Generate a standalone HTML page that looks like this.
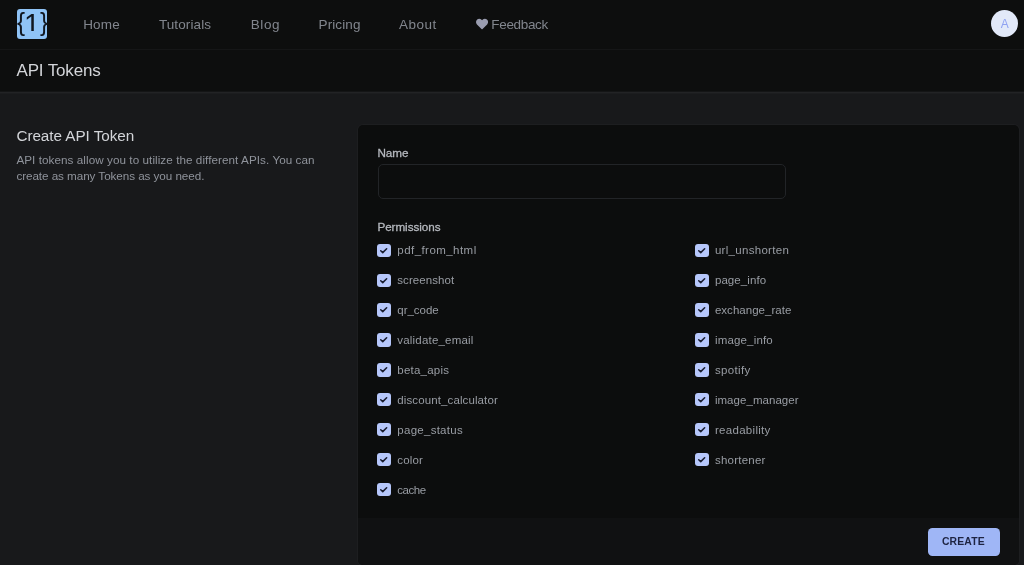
<!DOCTYPE html>
<html lang="en">
<head>
<meta charset="utf-8">
<title>API Tokens</title>
<style>
*{box-sizing:border-box;margin:0;padding:0}
html,body{width:1024px;height:565px;overflow:hidden}
body{background:#18191b;font-family:"Liberation Sans",sans-serif;position:relative}
#wrap{position:absolute;left:0;top:0;width:1024px;height:565px;will-change:transform}
.nav{position:absolute;left:0;top:0;width:1024px;height:50px;background:#0d0e0e;border-bottom:1px solid #151617}
.header{position:absolute;left:0;top:50px;width:1024px;height:43px;background:#0d0e0e;border-bottom:1px solid #222325;box-shadow:inset 0 -1px 0 #141516,0 1px 0 #1c1d1f}
.logo{position:absolute;left:16.5px;top:8.6px;width:30.7px;height:30px;border-radius:3px;background:#8fc3f6}
.lg{position:absolute;display:block;color:#10161f;white-space:pre}
.br{font-size:26px;line-height:30px;transform:scaleX(.93);transform-origin:0 0}
.oneclip{position:absolute;display:block;left:22px;top:10px;width:16px;height:21px;overflow:hidden}
.one{left:1.92px;top:-2px;font-size:28.9px;line-height:32px}
.avatar{position:absolute;left:991.1px;top:10.2px;width:27px;height:27px;border-radius:50%;background:#e2e9f9}
.heart{position:absolute;left:476px;top:18.4px;width:12.1px;height:12.1px}
.card{position:absolute;left:357.7px;top:124.6px;width:661px;height:440.6px;background:#0c0d0d;border-radius:5px;overflow:hidden;box-shadow:0 0 0 1px #1d1e20}
.foot{position:absolute;left:0;top:393.2px;width:100%;height:60px;background:#101112}
.input{position:absolute;left:377.5px;top:164.3px;width:408.5px;height:35.1px;border:1px solid #222427;border-radius:5px;background:#0c0d0d}
.cb{position:absolute;width:13.4px;height:13.4px;border-radius:3px;background:#b6c7fb}
.cb svg{position:absolute;left:0;top:0;width:13.4px;height:13.4px}
.btn{position:absolute;left:927.8px;top:527.5px;width:72.2px;height:28.1px;border-radius:4.5px;background:#9fb6f6}
.t{position:absolute;white-space:pre;font-weight:normal;display:block}
</style>
</head>
<body>
<div id="wrap">
<div class="nav"></div>
<div class="header"></div>
<div class="logo"></div>
<div class="lgw"><span class="lg br" id="lg1" style="left:16.5px;top:6.5px">{</span><span class="oneclip"><span class="lg one" id="lg2">1</span></span><span class="lg br" id="lg3" style="left:39.6px;top:6.5px">}</span></div>
<svg class="heart" viewBox="0 0 512 512"><path d="M462.3 62.6C407.5 15.9 326 24.300 275.700 76.200L256 96.500l-19.700-20.300C186.100 24.300 104.500 15.900 49.700 62.600c-62.800 53.600-66.100 149.800-9.900 207.900l193.500 199.800c12.500 12.900 32.800 12.900 45.300 0l193.500-199.800c56.300-58.100 53-154.300-9.800-207.900z" fill="#9a9db0"/></svg>
<div class="avatar"></div>
<div class="card"><div class="foot"></div></div>
<div class="input"></div>
<div class="cb" style="left:377.2px;top:243.65px"><svg viewBox="0 0 13.4 13.4"><path d="M3.75 6.8L5.75 8.6L9.65 4.8" fill="none" stroke="#171b2e" stroke-width="1.55" stroke-linecap="round" stroke-linejoin="round"/></svg></div>
<div class="cb" style="left:377.2px;top:273.54px"><svg viewBox="0 0 13.4 13.4"><path d="M3.75 6.8L5.75 8.6L9.65 4.8" fill="none" stroke="#171b2e" stroke-width="1.55" stroke-linecap="round" stroke-linejoin="round"/></svg></div>
<div class="cb" style="left:377.2px;top:303.43px"><svg viewBox="0 0 13.4 13.4"><path d="M3.75 6.8L5.75 8.6L9.65 4.8" fill="none" stroke="#171b2e" stroke-width="1.55" stroke-linecap="round" stroke-linejoin="round"/></svg></div>
<div class="cb" style="left:377.2px;top:333.32px"><svg viewBox="0 0 13.4 13.4"><path d="M3.75 6.8L5.75 8.6L9.65 4.8" fill="none" stroke="#171b2e" stroke-width="1.55" stroke-linecap="round" stroke-linejoin="round"/></svg></div>
<div class="cb" style="left:377.2px;top:363.21px"><svg viewBox="0 0 13.4 13.4"><path d="M3.75 6.8L5.75 8.6L9.65 4.8" fill="none" stroke="#171b2e" stroke-width="1.55" stroke-linecap="round" stroke-linejoin="round"/></svg></div>
<div class="cb" style="left:377.2px;top:393.10px"><svg viewBox="0 0 13.4 13.4"><path d="M3.75 6.8L5.75 8.6L9.65 4.8" fill="none" stroke="#171b2e" stroke-width="1.55" stroke-linecap="round" stroke-linejoin="round"/></svg></div>
<div class="cb" style="left:377.2px;top:422.99px"><svg viewBox="0 0 13.4 13.4"><path d="M3.75 6.8L5.75 8.6L9.65 4.8" fill="none" stroke="#171b2e" stroke-width="1.55" stroke-linecap="round" stroke-linejoin="round"/></svg></div>
<div class="cb" style="left:377.2px;top:452.88px"><svg viewBox="0 0 13.4 13.4"><path d="M3.75 6.8L5.75 8.6L9.65 4.8" fill="none" stroke="#171b2e" stroke-width="1.55" stroke-linecap="round" stroke-linejoin="round"/></svg></div>
<div class="cb" style="left:377.2px;top:482.77px"><svg viewBox="0 0 13.4 13.4"><path d="M3.75 6.8L5.75 8.6L9.65 4.8" fill="none" stroke="#171b2e" stroke-width="1.55" stroke-linecap="round" stroke-linejoin="round"/></svg></div>
<div class="cb" style="left:695.3px;top:243.65px"><svg viewBox="0 0 13.4 13.4"><path d="M3.75 6.8L5.75 8.6L9.65 4.8" fill="none" stroke="#171b2e" stroke-width="1.55" stroke-linecap="round" stroke-linejoin="round"/></svg></div>
<div class="cb" style="left:695.3px;top:273.54px"><svg viewBox="0 0 13.4 13.4"><path d="M3.75 6.8L5.75 8.6L9.65 4.8" fill="none" stroke="#171b2e" stroke-width="1.55" stroke-linecap="round" stroke-linejoin="round"/></svg></div>
<div class="cb" style="left:695.3px;top:303.43px"><svg viewBox="0 0 13.4 13.4"><path d="M3.75 6.8L5.75 8.6L9.65 4.8" fill="none" stroke="#171b2e" stroke-width="1.55" stroke-linecap="round" stroke-linejoin="round"/></svg></div>
<div class="cb" style="left:695.3px;top:333.32px"><svg viewBox="0 0 13.4 13.4"><path d="M3.75 6.8L5.75 8.6L9.65 4.8" fill="none" stroke="#171b2e" stroke-width="1.55" stroke-linecap="round" stroke-linejoin="round"/></svg></div>
<div class="cb" style="left:695.3px;top:363.21px"><svg viewBox="0 0 13.4 13.4"><path d="M3.75 6.8L5.75 8.6L9.65 4.8" fill="none" stroke="#171b2e" stroke-width="1.55" stroke-linecap="round" stroke-linejoin="round"/></svg></div>
<div class="cb" style="left:695.3px;top:393.10px"><svg viewBox="0 0 13.4 13.4"><path d="M3.75 6.8L5.75 8.6L9.65 4.8" fill="none" stroke="#171b2e" stroke-width="1.55" stroke-linecap="round" stroke-linejoin="round"/></svg></div>
<div class="cb" style="left:695.3px;top:422.99px"><svg viewBox="0 0 13.4 13.4"><path d="M3.75 6.8L5.75 8.6L9.65 4.8" fill="none" stroke="#171b2e" stroke-width="1.55" stroke-linecap="round" stroke-linejoin="round"/></svg></div>
<div class="cb" style="left:695.3px;top:452.88px"><svg viewBox="0 0 13.4 13.4"><path d="M3.75 6.8L5.75 8.6L9.65 4.8" fill="none" stroke="#171b2e" stroke-width="1.55" stroke-linecap="round" stroke-linejoin="round"/></svg></div>
<div class="btn"></div>
<a class="t" id="n1" style="left:83.15px;top:16px;font-size:13.5px;line-height:18px;color:#82868e;letter-spacing:0.210px">Home</a>
<a class="t" id="n2" style="left:158.90px;top:16px;font-size:13.5px;line-height:18px;color:#82868e;letter-spacing:0.112px">Tutorials</a>
<a class="t" id="n3" style="left:250.65px;top:16px;font-size:13.5px;line-height:18px;color:#82868e;letter-spacing:0.630px">Blog</a>
<a class="t" id="n4" style="left:318.60px;top:16px;font-size:13.5px;line-height:18px;color:#82868e;letter-spacing:0.090px">Pricing</a>
<a class="t" id="n5" style="left:399.10px;top:16px;font-size:13.5px;line-height:18px;color:#82868e;letter-spacing:0.450px">About</a>
<a class="t" id="n6" style="left:491.30px;top:16px;font-size:13.5px;line-height:18px;color:#82868e;letter-spacing:-0.334px">Feedback</a>
<h1 class="t" id="h1" style="left:16.50px;top:60px;font-size:17px;line-height:22px;color:#d3d5d9;letter-spacing:-0.160px">API Tokens</h1>
<h2 class="t" id="h2" style="left:16.40px;top:126px;font-size:15.3px;line-height:20px;color:#d3d5d9;letter-spacing:-0.060px">Create API Token</h2>

<p><span class="t" id="p1" style="left:16.40px;top:152px;font-size:11.7px;line-height:15px;color:#8f939b;letter-spacing:0.059px">API tokens allow you to utilize the different APIs. You can</span> <span class="t" id="p2" style="left:16.40px;top:168px;font-size:11.7px;line-height:15px;color:#8f939b;letter-spacing:-0.065px">create as many Tokens as you need.</span></p>
<label class="t" id="l1" style="left:377.40px;top:145px;font-size:11.7px;line-height:15px;color:#b6b9bf;letter-spacing:-0.000px;-webkit-text-stroke:.3px #b6b9bf">Name</label>
<label class="t" id="l2" style="left:377.40px;top:219px;font-size:11.7px;line-height:15px;color:#b6b9bf;letter-spacing:-0.054px;-webkit-text-stroke:.3px #b6b9bf">Permissions</label>
<label class="t" id="a0" style="left:397.30px;top:243px;font-size:11.5px;line-height:15px;color:#999da4;letter-spacing:0.450px">pdf_from_html</label>
<label class="t" id="a1" style="left:397.30px;top:273px;font-size:11.5px;line-height:15px;color:#999da4;letter-spacing:0.060px">screenshot</label>
<label class="t" id="a2" style="left:397.30px;top:303px;font-size:11.5px;line-height:15px;color:#999da4;letter-spacing:-0.030px">qr_code</label>
<label class="t" id="a3" style="left:397.30px;top:333px;font-size:11.5px;line-height:15px;color:#999da4;letter-spacing:0.194px">validate_email</label>
<label class="t" id="a4" style="left:397.30px;top:363px;font-size:11.5px;line-height:15px;color:#999da4;letter-spacing:0.225px">beta_apis</label>
<label class="t" id="a5" style="left:397.30px;top:393px;font-size:11.5px;line-height:15px;color:#999da4;letter-spacing:0.110px">discount_calculator</label>
<label class="t" id="a6" style="left:397.30px;top:423px;font-size:11.5px;line-height:15px;color:#999da4;letter-spacing:0.270px">page_status</label>
<label class="t" id="a7" style="left:397.30px;top:453px;font-size:11.5px;line-height:15px;color:#999da4;letter-spacing:0.180px">color</label>
<label class="t" id="a8" style="left:397.30px;top:483px;font-size:11.5px;line-height:15px;color:#999da4;letter-spacing:-0.450px">cache</label>
<label class="t" id="b0" style="left:714.90px;top:243px;font-size:11.5px;line-height:15px;color:#999da4;letter-spacing:0.300px">url_unshorten</label>
<label class="t" id="b1" style="left:714.90px;top:273px;font-size:11.5px;line-height:15px;color:#999da4;letter-spacing:0.090px">page_info</label>
<label class="t" id="b2" style="left:714.90px;top:303px;font-size:11.5px;line-height:15px;color:#999da4;letter-spacing:0.030px">exchange_rate</label>
<label class="t" id="b3" style="left:714.90px;top:333px;font-size:11.5px;line-height:15px;color:#999da4;letter-spacing:0.180px">image_info</label>
<label class="t" id="b4" style="left:714.90px;top:363px;font-size:11.5px;line-height:15px;color:#999da4;letter-spacing:0.360px">spotify</label>
<label class="t" id="b5" style="left:714.90px;top:393px;font-size:11.5px;line-height:15px;color:#999da4;letter-spacing:0.045px">image_manager</label>
<label class="t" id="b6" style="left:714.90px;top:423px;font-size:11.5px;line-height:15px;color:#999da4;letter-spacing:0.306px">readability</label>
<label class="t" id="b7" style="left:714.90px;top:453px;font-size:11.5px;line-height:15px;color:#999da4;letter-spacing:0.247px">shortener</label>
<span class="t" id="bt" style="left:941.90px;top:535px;font-size:10.4px;line-height:14px;color:#1e2442;letter-spacing:0.162px;font-weight:bold">CREATE</span>
<span class="t" id="av" style="left:1000.80px;top:16px;font-size:12px;line-height:16px;color:#8fa2f2;letter-spacing:0.000px">A</span>
</div>
</body>
</html>
